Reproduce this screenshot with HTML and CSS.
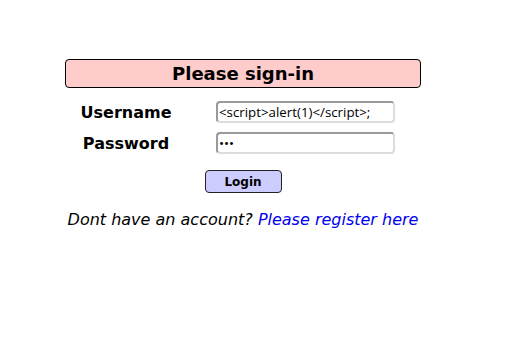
FILE: index.html
```html
<!DOCTYPE html>
<html>
<head>
<meta charset="utf-8">
<link rel="stylesheet" href="styles.css">
</head>
<body>
<div class="page">
  <div class="title">Please sign-in</div>
  <div class="form">
    <label class="label">Username</label>
    <input class="field" type="text" value="<script>alert(1)</script>;">
    <label class="label">Password</label>
    <input class="field" type="password" value="abc">
  </div>
  <div class="actions"><button class="btn">Login</button></div>
  <p class="note">Dont have an account? <a class="link" href="#">Please register here</a></p>
</div>
</body>
</html>
```
FILE: styles.css
```css
html, body {
  margin: 0;
  background: #fff;
}
body {
  font-family: "DejaVu Sans", sans-serif;
  color: #000;
}
.page {
  width: 356px;
  padding: 59px 0 0 65px;
}
.title {
  box-sizing: border-box;
  height: 29px;
  line-height: 27px;
  border: 1px solid #000;
  border-radius: 4px;
  background: #ffcccc;
  font-weight: bold;
  font-size: 18px;
  text-align: center;
}
.form {
  display: grid;
  grid-template-columns: 122px 179px;
  grid-auto-rows: 22px;
  column-gap: 29px;
  row-gap: 9px;
  margin-top: 13px;
  align-items: center;
}
.label {
  font-weight: bold;
  font-size: 16px;
  text-align: center;
}
.field {
  box-sizing: border-box;
  width: 179px;
  height: 22px;
  margin: 0;
  padding: 0 1px;
  border: 2px solid #dcdcdc;
  border-top-color: #9a9a9a;
  border-left-color: #9a9a9a;
  border-radius: 4px;
  font-family: "Open Sans", sans-serif;
  font-size: 13.3px;
  color: #000;
  background: #fff;
  outline: none;
}
.actions {
  display: flex;
  justify-content: center;
  margin-top: 16px;
}
.btn {
  box-sizing: border-box;
  width: 77px;
  height: 23px;
  margin: 0;
  padding: 0;
  border: 1px solid #222;
  border-radius: 4px;
  background: #ccccff;
  font-family: "DejaVu Sans", sans-serif;
  font-weight: bold;
  font-size: 12px;
  color: #000;
}
.note {
  margin: 17px 0 0;
  text-align: center;
  font-style: italic;
  font-size: 16px;
  white-space: nowrap;
}
.link {
  color: #0000ee;
  text-decoration: none;
}
```
